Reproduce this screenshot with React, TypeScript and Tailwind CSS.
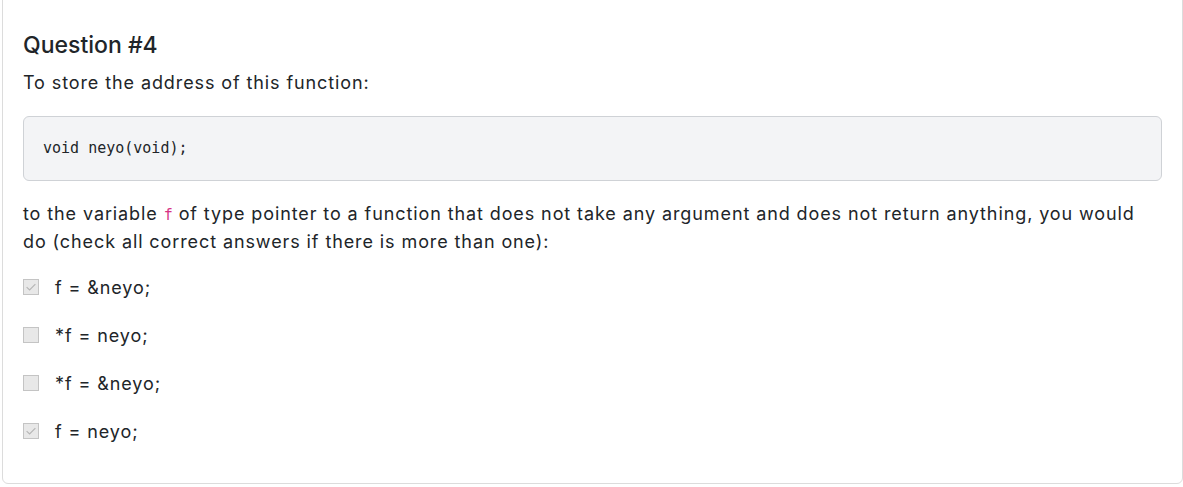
import React from "react";

const options = [
  { label: "f = &neyo;", checked: true },
  { label: "*f = neyo;", checked: false },
  { label: "*f = &neyo;", checked: false },
  { label: "f = neyo;", checked: true },
];

const Box = ({ checked }: { checked: boolean }) => (
  <span className="w-4 h-4 shrink-0 bg-[#e8e8e8] border border-[#c4c4c4] flex items-center justify-center">
    {checked && (
      <svg viewBox="0 0 16 16" className="w-3.5 h-3.5" fill="none" stroke="#b5b5b5" strokeWidth="1.3">
        <path d="M3 8.2 L6.4 11.4 L13 4.6" />
      </svg>
    )}
  </span>
);

const App = () => {
  return (
    <div className="w-[1183px] h-[487px] bg-white font-['Inter',sans-serif] text-[#212529] overflow-hidden">
      <div className="ml-[2px] mt-[-10px] h-[494px] border border-[#dcdcdc] rounded-md px-5 pt-[40px]">
        <h2 className="text-[23px] leading-[28px] font-medium">Question #4</h2>
        <p className="mt-[10px] text-[18px] leading-[28px] tracking-[0.05em]">To store the address of this function:</p>
        <div className="mt-[19px] h-[65px] bg-[#f3f4f6] border border-[#cfd2d6] rounded-md flex items-center px-[19px]">
          <code className="font-['DejaVu_Sans_Mono',monospace] text-[15px] text-[#212529]">void neyo(void);</code>
        </div>
        <p className="mt-[19px] text-[18px] leading-[28px] tracking-[0.05em]">
          <span>to the variable </span>
          <code className="font-['DejaVu_Sans_Mono',monospace] text-[15px] leading-none tracking-normal text-[#d63384]">f</code>
          <span> of type pointer to a function that does not take any argument and does not return anything, you would</span>
          <br />
          <span>do (check all correct answers if there is more than one):</span>
        </p>
        <div className="mt-[17px] flex flex-col gap-5">
          {options.map((o) => (
            <label key={o.label} className="flex items-center gap-4 h-7 text-[18px] tracking-[0.05em]">
              <Box checked={o.checked} />
              <span>{o.label}</span>
            </label>
          ))}
        </div>
      </div>
    </div>
  );
};

export default App;
